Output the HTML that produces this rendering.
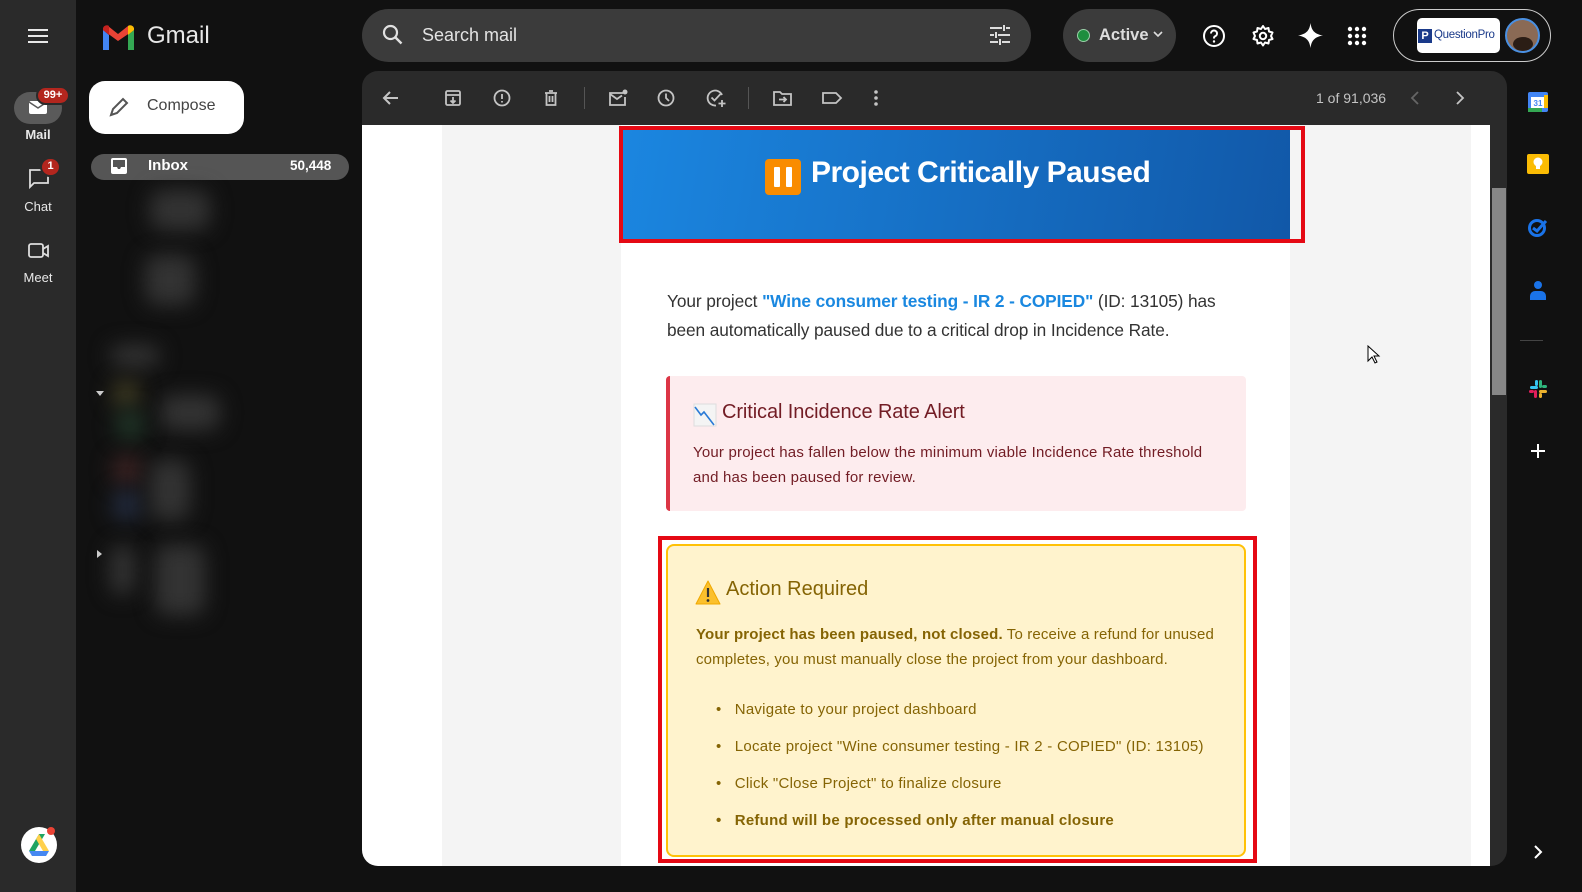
<!DOCTYPE html>
<html><head><meta charset="utf-8">
<style>
*{margin:0;padding:0;box-sizing:border-box}
body{width:1582px;height:892px;overflow:hidden;background:#111;font-family:"Liberation Sans",Arial,sans-serif;position:relative;color:#fff}
.a{position:absolute}
.rail{left:0;top:0;width:76px;height:892px;background:#2a2a2a}
.lbl{width:76px;text-align:center;font-size:13px;color:#e8e8e8}
.badge{background:#b3261e;border:2px solid #2a2a2a;color:#fff;font-size:11px;font-weight:bold;border-radius:10px;text-align:center;line-height:15px}
.blob{background:#333;filter:blur(10px);border-radius:12px}
.ic{stroke:#c4c4c4;fill:none;stroke-width:1.8}
.mail{font-family:"Liberation Sans",sans-serif}
.t{white-space:nowrap}
</style></head><body>
<div class="a rail"></div>
<svg class="a" style="left:27px;top:27px" width="22" height="18"><path d="M1 3h20M1 9h20M1 15h20" stroke="#e8e8e8" stroke-width="2"/></svg>
<div class="a" style="left:14px;top:92px;width:48px;height:32px;border-radius:16px;background:#5a5a5a"></div>
<svg class="a" style="left:28px;top:100px" width="20" height="15"><rect x="1" y="1" width="18" height="13" rx="2" fill="#fff"/><path d="M1 2l9 6 9-6" stroke="#5a5a5a" stroke-width="1.5" fill="none"/></svg>
<div class="a badge" style="left:36px;top:86px;width:34px;height:19px">99+</div>
<div class="a lbl" style="top:127px;font-weight:bold">Mail</div>
<svg class="a" style="left:28px;top:168px" width="22" height="22"><path d="M2 2h18v13H6l-4 4z" stroke="#ddd" stroke-width="1.8" fill="none"/></svg>
<div class="a badge" style="left:40px;top:157px;width:21px;height:20px">1</div>
<div class="a lbl" style="top:199px">Chat</div>
<svg class="a" style="left:28px;top:242px" width="22" height="18"><rect x="1" y="2" width="14" height="13" rx="2" stroke="#ddd" stroke-width="1.8" fill="none"/><path d="M15 7l5-3v10l-5-3" stroke="#ddd" stroke-width="1.8" fill="none"/></svg>
<div class="a lbl" style="top:270px">Meet</div>
<svg class="a" style="left:20px;top:826px" width="38" height="38"><circle cx="19" cy="19" r="18" fill="#fff"/><path d="M19 8l-10 17h6l10-17z" fill="#1fa463"/><path d="M19 8l10 17h-6l-7-12z" fill="#ffd04b"/><path d="M9 25h20l-3 5H12z" fill="#4688f1"/><circle cx="31" cy="5" r="4" fill="#ea4335"/></svg>

<svg class="a" style="left:101px;top:24px" width="35" height="26"><path d="M2 26V6l6 5v15z" fill="#4285f4"/><path d="M27 26V11l6-5v20z" fill="#34a853"/><path d="M2 6l15 11L33 6v-1a4 4 0 0 0-6-3l-10 8L7 2a4 4 0 0 0-5 3z" fill="#ea4335"/><path d="M27 11l6-5V4a4 4 0 0 0-6-2z" fill="#fbbc04"/><path d="M2 6l6 5V2a4 4 0 0 0-6 2z" fill="#c5221f"/></svg>
<div class="a t" style="left:147px;top:22px;font-size:24px;color:#e8e8e8">Gmail</div>
<div class="a" style="left:89px;top:81px;width:155px;height:53px;background:#fff;border-radius:16px"></div>
<svg class="a" style="left:107px;top:95px" width="24" height="24"><path d="M4 20l2-6L16 4l4 4-10 10z" stroke="#555" stroke-width="2" fill="none"/></svg>
<div class="a t" style="left:147px;top:97px;font-size:16px;color:#444">Compose</div>
<div class="a" style="left:91px;top:154px;width:258px;height:26px;background:#555;border-radius:13px"></div>
<svg class="a" style="left:111px;top:158px" width="16" height="16"><rect x="0" y="0" width="16" height="16" rx="2" fill="#fff"/><path d="M2 9h4l1 2h2l1-2h4v-7H2z" fill="#555"/></svg>
<div class="a t" style="left:148px;top:157px;font-size:15px;font-weight:bold">Inbox</div>
<div class="a t" style="left:290px;top:158px;font-size:13.5px;font-weight:bold">50,448</div>
<div class="a blob" style="left:150px;top:190px;width:60px;height:40px"></div>
<div class="a blob" style="left:145px;top:255px;width:50px;height:50px"></div>
<div class="a blob" style="left:110px;top:345px;width:50px;height:22px"></div>
<div class="a blob" style="left:160px;top:395px;width:60px;height:35px"></div>
<div class="a blob" style="left:112px;top:380px;width:28px;height:28px;background:#3d3a22"></div>
<div class="a blob" style="left:115px;top:410px;width:30px;height:30px;background:#1f3326"></div>
<div class="a blob" style="left:112px;top:455px;width:30px;height:30px;background:#3a2222"></div>
<div class="a blob" style="left:112px;top:490px;width:30px;height:30px;background:#222a3d"></div>
<div class="a blob" style="left:150px;top:460px;width:40px;height:60px"></div>
<div class="a blob" style="left:155px;top:545px;width:50px;height:70px"></div>
<div class="a blob" style="left:110px;top:545px;width:25px;height:50px"></div>
<div class="a" style="left:96px;top:391px;width:0;height:0;border-left:4px solid transparent;border-right:4px solid transparent;border-top:5px solid #ccc"></div>
<div class="a" style="left:97px;top:550px;width:0;height:0;border-top:4px solid transparent;border-bottom:4px solid transparent;border-left:5px solid #ccc"></div>

<div class="a" style="left:362px;top:9px;width:669px;height:53px;background:#3b3b3b;border-radius:27px"></div>
<svg class="a" style="left:381px;top:23px" width="24" height="24"><circle cx="9.5" cy="9.5" r="6.5" stroke="#e0e0e0" stroke-width="2.2" fill="none"/><path d="M14.5 14.5l6 6" stroke="#e0e0e0" stroke-width="2.4"/></svg>
<div class="a t" style="left:422px;top:25px;font-size:18px;color:#e3e3e3">Search mail</div>
<svg class="a" style="left:988px;top:24px" width="24" height="22"><path d="M2 4h12M18 4h4M2 11h4M10 11h12M2 18h8M14 18h8M16 1v6M8 8v6M12 15v6" stroke="#ddd" stroke-width="2" fill="none"/></svg>
<div class="a" style="left:1063px;top:9px;width:113px;height:53px;background:#3b3b3b;border-radius:27px"></div>
<div class="a" style="left:1077px;top:29px;width:13px;height:13px;border-radius:50%;background:#1e8e3e;border:1.5px solid #9ad0a8"></div>
<div class="a t" style="left:1099px;top:26px;font-size:16.5px;font-weight:bold;color:#ddd">Active</div>
<svg class="a" style="left:1153px;top:31px" width="10" height="8"><path d="M1 1l4 4 4-4" stroke="#ddd" stroke-width="1.6" fill="none"/></svg>
<svg class="a" style="left:1202px;top:24px" width="24" height="24"><circle cx="12" cy="12" r="10" stroke="#fff" stroke-width="2" fill="none"/><path d="M9 9.5a3 3 0 1 1 4 2.8c-1 .4-1 1-1 2.2" stroke="#fff" stroke-width="2" fill="none"/><circle cx="12" cy="17.5" r="1.2" fill="#fff"/></svg>
<svg class="a" style="left:1251px;top:24px" width="24" height="24"><circle cx="12" cy="12" r="3.2" stroke="#fff" stroke-width="2" fill="none"/><path d="M12 2l2 3 3.5-1 .5 3.5 3.5 1-1.5 3.5 1.5 3-3.5 1-.5 3.5-3.5-1-2 3-2-3-3.5 1-.5-3.5-3.5-1 1.5-3-1.5-3.5 3.5-1 .5-3.5 3.5 1z" stroke="#fff" stroke-width="2" fill="none" stroke-linejoin="round"/></svg>
<svg class="a" style="left:1298px;top:23px" width="25" height="25"><path d="M12.5 0C13.5 7 16 11 25 12.5 16 14 13.5 18 12.5 25 11.5 18 9 14 0 12.5 9 11 11.5 7 12.5 0z" fill="#fff"/></svg>
<svg class="a" style="left:1347px;top:26px" width="20" height="20"><g fill="#fff"><circle cx="3" cy="3" r="2.2"/><circle cx="10" cy="3" r="2.2"/><circle cx="17" cy="3" r="2.2"/><circle cx="3" cy="10" r="2.2"/><circle cx="10" cy="10" r="2.2"/><circle cx="17" cy="10" r="2.2"/><circle cx="3" cy="17" r="2.2"/><circle cx="10" cy="17" r="2.2"/><circle cx="17" cy="17" r="2.2"/></g></svg>
<div class="a" style="left:1393px;top:9px;width:158px;height:53px;border:1.5px solid #ccc;border-radius:27px"></div>
<div class="a" style="left:1417px;top:18px;width:83px;height:35px;background:#fff;border-radius:5px"></div>
<div class="a" style="left:1418px;top:29px;width:14px;height:14px;background:#1a3a8a;color:#fff;font-size:11px;font-weight:bold;text-align:center;line-height:14px">P</div>
<div class="a t" style="left:1434px;top:29px;font-size:11.5px;color:#1a3a8a;letter-spacing:-.3px">QuestionPro</div>
<div class="a" style="left:1505px;top:18px;width:35px;height:35px;border-radius:50%;background:#8a6a55;border:2px solid #4a90e2;overflow:hidden"><div style="margin:17px 0 0 6px;width:20px;height:14px;background:#2b1d15;border-radius:50%"></div></div>

<div class="a" style="left:362px;top:71px;width:1145px;height:795px;background:#2a2a2a;border-radius:16px"></div>
<svg class="a" style="left:380px;top:87px" width="22" height="22"><path d="M18 11H5M10 5l-6 6 6 6" stroke="#c4c4c4" stroke-width="2" fill="none"/></svg>
<svg class="a" style="left:443px;top:88px" width="20" height="20"><rect x="3" y="3" width="14" height="14" rx="1.5" class="ic"/><path d="M3 7h14M10 9v6M7.5 12.5L10 15l2.5-2.5" class="ic"/></svg>
<svg class="a" style="left:492px;top:88px" width="20" height="20"><circle cx="10" cy="10" r="7.5" class="ic"/><path d="M10 6v5M10 13v1.5" class="ic"/></svg>
<svg class="a" style="left:541px;top:88px" width="20" height="20"><path d="M4 5h12M8 3h4M5.5 5v12h9V5M8.5 8v6M11.5 8v6" class="ic"/></svg>
<div class="a" style="left:584px;top:87px;width:1px;height:22px;background:#555"></div>
<svg class="a" style="left:607px;top:88px" width="22" height="20"><path d="M16 5H3v12h15V9" class="ic"/><path d="M3 6l7 5 5-3.5" class="ic"/><circle cx="18" cy="4" r="2.5" fill="#c4c4c4"/></svg>
<svg class="a" style="left:656px;top:88px" width="20" height="20"><circle cx="10" cy="10" r="7.5" class="ic"/><path d="M10 5.5V10l3 3" class="ic"/></svg>
<svg class="a" style="left:705px;top:87px" width="22" height="22"><path d="M17 8A7.5 7.5 0 1 0 11 18.5" class="ic"/><path d="M6.5 10.5l3 3 6-6.5M17 13v7M13.5 16.5h7" class="ic"/></svg>
<div class="a" style="left:748px;top:87px;width:1px;height:22px;background:#555"></div>
<svg class="a" style="left:772px;top:88px" width="22" height="20"><path d="M2 4h6l2 2h9v11H2z" class="ic"/><path d="M7 11.5h7M11.5 9l2.5 2.5-2.5 2.5" class="ic"/></svg>
<svg class="a" style="left:821px;top:88px" width="22" height="20"><path d="M2 5h13l5 5-5 5H2z" class="ic"/></svg>
<svg class="a" style="left:872px;top:88px" width="8" height="20"><g fill="#c4c4c4"><circle cx="4" cy="4" r="1.8"/><circle cx="4" cy="10" r="1.8"/><circle cx="4" cy="16" r="1.8"/></g></svg>
<div class="a t" style="left:1316px;top:90px;font-size:14px;color:#c4c4c4">1 of 91,036</div>
<svg class="a" style="left:1410px;top:91px" width="10" height="14"><path d="M8 1L2 7l6 6" stroke="#666" stroke-width="1.8" fill="none"/></svg>
<svg class="a" style="left:1455px;top:91px" width="10" height="14"><path d="M2 1l6 6-6 6" stroke="#c4c4c4" stroke-width="1.8" fill="none"/></svg>

<div class="a" style="left:362px;top:125px;width:1128px;height:741px;background:#fff;border-radius:0 0 0 16px;overflow:hidden">
  <div class="a" style="left:80px;top:0;width:1029px;height:741px;background:#f4f4f4"></div>
  <div class="a" style="left:259px;top:0;width:669px;height:741px;background:#fff"></div>
</div>
<div class="a" style="left:1492px;top:188px;width:14px;height:207px;background:#878787"></div>

<div class="mail">
<div class="a" style="left:619px;top:126px;width:686px;height:117px;border:4px solid #e50914"></div>
<div class="a" style="left:623px;top:130px;width:667px;height:109px;background:linear-gradient(100deg,#1b86e0,#1158a8)"></div>
<div class="a" style="left:765px;top:159px;width:36px;height:36px;background:#f98c00;border-radius:4px"></div>
<div class="a" style="left:774px;top:167px;width:6px;height:20px;background:#fff;border-radius:1px"></div>
<div class="a" style="left:786px;top:167px;width:6px;height:20px;background:#fff;border-radius:1px"></div>
<div class="a t" style="left:811px;top:156px;font-size:30px;font-weight:bold;color:#fff;letter-spacing:-.5px">Project Critically Paused</div>

<div class="a t" style="left:667px;top:287px;font-size:17.3px;color:#333;letter-spacing:-.1px;line-height:29px">Your project <b style="color:#1a88e0">"Wine consumer testing - IR 2 - COPIED"</b> (ID: 13105) has<br>been automatically paused due to a critical drop in Incidence Rate.</div>

<div class="a" style="left:666px;top:376px;width:580px;height:135px;background:#fdecee;border-left:4px solid #dc3545;border-radius:4px"></div>
<svg class="a" style="left:693px;top:403px" width="24" height="24"><rect x="1" y="1" width="22" height="22" fill="#f4f4f4" stroke="#ddd"/><path d="M2 4l6 8 3-3 10 13" stroke="#2a7ad6" stroke-width="1.6" fill="none"/></svg>
<div class="a t" style="left:722px;top:401px;font-size:20px;color:#721c24;letter-spacing:-.1px">Critical Incidence Rate Alert</div>
<div class="a t" style="left:693px;top:440px;font-size:15px;color:#721c24;line-height:25px;letter-spacing:.2px">Your project has fallen below the minimum viable Incidence Rate threshold<br>and has been paused for review.</div>

<div class="a" style="left:658px;top:536px;width:599px;height:327px;border:4px solid #e50914"></div>
<div class="a" style="left:666px;top:544px;width:580px;height:313px;background:#fff3cd;border:2px solid #ffc107;border-radius:8px"></div>
<svg class="a" style="left:695px;top:580px" width="26" height="25"><path d="M13 1L25 24H1z" fill="#fbc02d" stroke="#f0a800" stroke-linejoin="round"/><path d="M13 8v9" stroke="#333" stroke-width="2.2"/><circle cx="13" cy="20.5" r="1.4" fill="#333"/></svg>
<div class="a t" style="left:726px;top:578px;font-size:20px;color:#856404;letter-spacing:0">Action Required</div>
<div class="a t" style="left:696px;top:622px;font-size:15px;color:#856404;line-height:25px;letter-spacing:.15px"><b>Your project has been paused, not closed.</b> To receive a refund for unused<br>completes, you must manually close the project from your dashboard.</div>
<div class="a t" style="left:716px;top:691px;font-size:15px;color:#856404;line-height:37px;letter-spacing:.25px">
<div>•&nbsp;&nbsp; Navigate to your project dashboard</div>
<div>•&nbsp;&nbsp; Locate project "Wine consumer testing - IR 2 - COPIED" (ID: 13105)</div>
<div>•&nbsp;&nbsp; Click "Close Project" to finalize closure</div>
<div><b>•&nbsp;&nbsp; Refund will be processed only after manual closure</b></div>
</div>
</div>

<svg class="a" style="left:1367px;top:345px" width="14" height="20"><path d="M1 1v15l4-4 3 6 2-1-3-6h5z" fill="#fff" stroke="#000" stroke-width="1"/></svg>

<svg class="a" style="left:1527px;top:91px" width="22" height="22"><rect x="1" y="1" width="20" height="20" rx="2" fill="#4285f4"/><rect x="4" y="6" width="14" height="11" fill="#fff"/><rect x="1" y="17" width="14" height="4" fill="#34a853"/><rect x="17" y="4" width="4" height="13" fill="#fbbc04"/><text x="11" y="15" font-size="8" font-weight="bold" fill="#4285f4" text-anchor="middle" font-family="Liberation Sans">31</text></svg>
<svg class="a" style="left:1527px;top:153px" width="22" height="22"><rect x="0" y="1" width="22" height="20" rx="2" fill="#fbbc04"/><circle cx="11" cy="9" r="4.5" fill="#fff"/><rect x="9" y="13" width="4" height="3" fill="#fff"/></svg>
<svg class="a" style="left:1527px;top:216px" width="22" height="22"><circle cx="10" cy="12" r="7.5" stroke="#1a73e8" stroke-width="3" fill="none"/><path d="M6 12l4 3 9-10" stroke="#1a73e8" stroke-width="3" fill="none"/></svg>
<svg class="a" style="left:1527px;top:279px" width="22" height="22"><circle cx="11" cy="6" r="4" fill="#1a73e8"/><path d="M3 21v-4a5 5 0 0 1 5-5h6a5 5 0 0 1 5 5v4z" fill="#1a73e8"/></svg>
<div class="a" style="left:1520px;top:340px;width:23px;height:1px;background:#444"></div>
<svg class="a" style="left:1528px;top:379px" width="20" height="20"><rect x="2" y="7" width="8" height="3" rx="1.5" fill="#36c5f0"/><rect x="7" y="1" width="3" height="6" rx="1.5" fill="#36c5f0"/><rect x="11" y="1" width="3" height="8" rx="1.5" fill="#2eb67d"/><rect x="14" y="6" width="5" height="3" rx="1.5" fill="#2eb67d"/><rect x="11" y="11" width="8" height="3" rx="1.5" fill="#ecb22e"/><rect x="11" y="14" width="3" height="5" rx="1.5" fill="#ecb22e"/><rect x="6" y="11" width="3" height="8" rx="1.5" fill="#e01e5a"/><rect x="1" y="11" width="5" height="3" rx="1.5" fill="#e01e5a"/></svg>
<svg class="a" style="left:1530px;top:443px" width="16" height="16"><path d="M8 1v14M1 8h14" stroke="#fff" stroke-width="2"/></svg>
<svg class="a" style="left:1533px;top:845px" width="10" height="14"><path d="M2 1l6 6-6 6" stroke="#fff" stroke-width="2" fill="none"/></svg>
</body></html>
